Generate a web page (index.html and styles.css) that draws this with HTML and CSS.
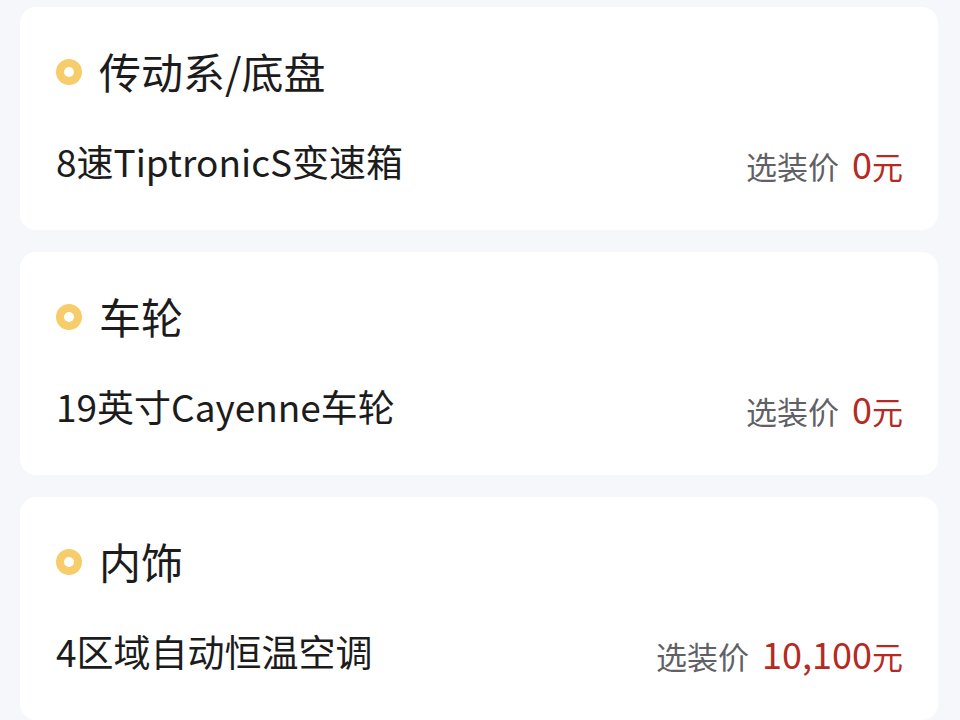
FILE: index.html
```html
<!DOCTYPE html>
<html lang="zh">
<head>
<meta charset="utf-8">
<link rel="stylesheet" href="styles.css">
</head>
<body>
<div class="list">
  <section class="card">
    <div class="title"><span class="dot"></span><span>传动系/底盘</span></div>
    <div class="item">
      <span class="name">8速TiptronicS变速箱</span>
      <span class="price"><span class="label">选装价</span><span class="num">0</span><span class="unit">元</span></span>
    </div>
  </section>
  <section class="card">
    <div class="title"><span class="dot"></span><span>车轮</span></div>
    <div class="item">
      <span class="name">19英寸Cayenne车轮</span>
      <span class="price"><span class="label">选装价</span><span class="num">0</span><span class="unit">元</span></span>
    </div>
  </section>
  <section class="card">
    <div class="title"><span class="dot"></span><span>内饰</span></div>
    <div class="item">
      <span class="name">4区域自动恒温空调</span>
      <span class="price"><span class="label">选装价</span><span class="num">10,100</span><span class="unit">元</span></span>
    </div>
  </section>
</div>
</body>
</html>
```
FILE: styles.css
```css
html, body {
  margin: 0;
  padding: 0;
  background: #f6f7fb;
  font-family: "Noto Sans CJK SC", "Noto Sans", sans-serif;
  color: #1c1c1c;
}
.list {
  display: flex;
  flex-direction: column;
  gap: 22px;
  padding: 7px 22px 0 20px;
  height: 713px;
  overflow: hidden;
}
.card {
  background: #ffffff;
  border-radius: 16px;
  padding: 38px 35px 46px 36px;
  flex-shrink: 0;
}
.title {
  display: flex;
  align-items: center;
  gap: 17px;
  height: 52px;
  font-size: 42px;
  line-height: 52px;
}
.dot {
  width: 26px;
  height: 26px;
  box-sizing: border-box;
  border-radius: 50%;
  border: 8px solid #f7cd6b;
  background: #fff;
  flex-shrink: 0;
  margin-top: 2px;
}
.item {
  display: flex;
  justify-content: space-between;
  align-items: center;
  margin-top: 41px;
  height: 46px;
}
.name {
  font-size: 37px;
  line-height: 46px;
}
.price {
  display: flex;
  align-items: baseline;
  margin-top: 4px;
}
.label {
  font-size: 31px;
  color: #5f6166;
  margin-right: 13px;
}
.num {
  font-size: 36px;
  color: #b52a22;
}
.unit {
  font-size: 31px;
  color: #b52a22;
}
```
